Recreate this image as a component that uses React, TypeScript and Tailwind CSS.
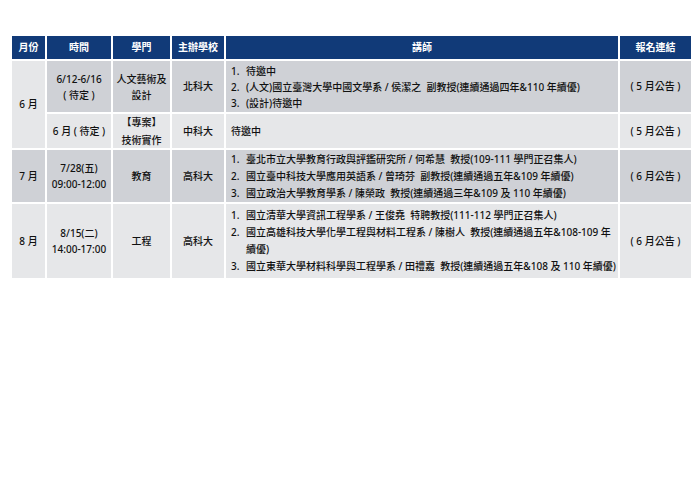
import React from "react";

const font = {
  fontFamily: '"Noto Sans", "Noto Sans CJK TC", sans-serif',
};

function List({ items }: { items: React.ReactNode[] }) {
  return (
    <div className="flex flex-col">
      {items.map((it, i) => (
        <div key={i} className="flex">
          <span className="w-[15px] shrink-0">{i + 1}.</span>
          <span className="whitespace-pre">{it}</span>
        </div>
      ))}
    </div>
  );
}

export default function App() {
  const dark = "bg-[#cfd1d6]";
  const light = "bg-[#e6e7e9]";
  const c = "flex items-center justify-center text-center whitespace-pre";
  return (
    <div className="w-[700px] h-[495px] bg-white text-[10px] text-[#111111] font-medium" style={font}>
      <div className="pt-[36px] pl-[12px]">
        <div className="grid grid-cols-[33px_64px_57px_52px_392px_71px] grid-rows-[23px_51px_34px_52px_74px] gap-[2px]">
          {/* header */}
          {["月份", "時間", "學門", "主辦學校", "講師", "報名連結"].map((h) => (
            <div key={h} className={`${c} bg-[#113a78] text-white font-bold`}>
              {h}
            </div>
          ))}

          {/* row 1 */}
          <div className={`${c} ${light} row-span-2`}>6 月</div>
          <div className={`${c} ${dark} leading-[16px]`}>
            <div>
              6/12-6/16
              <br />( 待定 )
            </div>
          </div>
          <div className={`${c} ${dark} leading-[16px]`}>
            <div>
              人文藝術及
              <br />
              設計
            </div>
          </div>
          <div className={`${c} ${dark}`}>北科大</div>
          <div className={`flex items-center pl-[5px] ${dark} leading-[16px]`}>
            <List
              items={[
                "待邀中",
                "(人文)國立臺灣大學中國文學系 / 侯潔之  副教授(連續通過四年&110 年續優)",
                "(設計)待邀中",
              ]}
            />
          </div>
          <div className={`${c} ${dark}`}>( 5 月公告 )</div>

          {/* row 2 */}
          <div className={`${c} ${light}`}>6 月 ( 待定 )</div>
          <div className={`${c} ${light} leading-[18px]`}>
            <div>
              【專案】
              <br />
              技術實作
            </div>
          </div>
          <div className={`${c} ${light}`}>中科大</div>
          <div className={`flex items-center pl-[5px] ${light}`}>待邀中</div>
          <div className={`${c} ${light}`}>( 5 月公告 )</div>

          {/* row 3 */}
          <div className={`${c} ${dark}`}>7 月</div>
          <div className={`${c} ${dark} leading-[16px]`}>
            <div>
              7/28(五)
              <br />
              09:00-12:00
            </div>
          </div>
          <div className={`${c} ${dark}`}>教育</div>
          <div className={`${c} ${dark}`}>高科大</div>
          <div className={`flex items-center pl-[5px] ${dark} leading-[17px]`}>
            <List
              items={[
                "臺北市立大學教育行政與評鑑研究所 / 何希慧  教授(109-111 學門正召集人)",
                "國立臺中科技大學應用英語系 / 曾琦芬  副教授(連續通過五年&109 年續優)",
                "國立政治大學教育學系 / 陳榮政  教授(連續通過三年&109 及 110 年續優)",
              ]}
            />
          </div>
          <div className={`${c} ${dark}`}>( 6 月公告 )</div>

          {/* row 4 */}
          <div className={`${c} ${light}`}>8 月</div>
          <div className={`${c} ${light} leading-[16px]`}>
            <div>
              8/15(二)
              <br />
              14:00-17:00
            </div>
          </div>
          <div className={`${c} ${light}`}>工程</div>
          <div className={`${c} ${light}`}>高科大</div>
          <div className={`flex items-center pl-[5px] ${light} leading-[17px]`}>
            <List
              items={[
                "國立清華大學資訊工程學系 / 王俊堯  特聘教授(111-112 學門正召集人)",
                "國立高雄科技大學化學工程與材料工程系 / 陳樹人  教授(連續通過五年&108-109 年\n續優)",
                "國立東華大學材料科學與工程學系 / 田禮嘉  教授(連續通過五年&108 及 110 年續優)",
              ]}
            />
          </div>
          <div className={`${c} ${light}`}>( 6 月公告 )</div>
        </div>
      </div>
    </div>
  );
}
